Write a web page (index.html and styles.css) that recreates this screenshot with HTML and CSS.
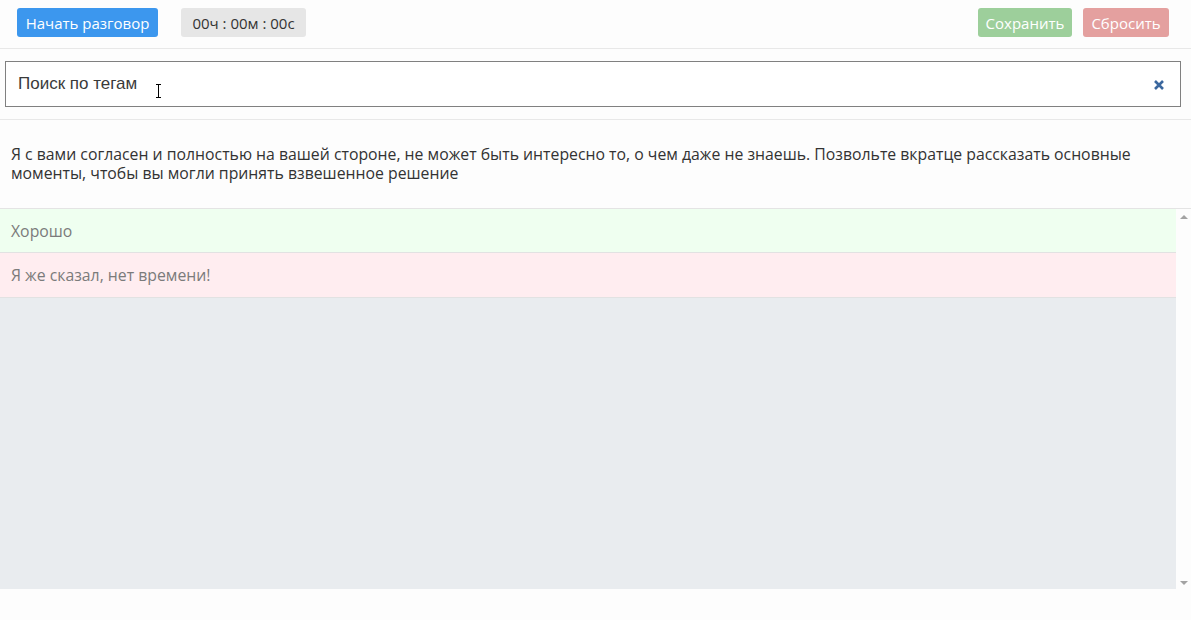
FILE: index.html
```html
<!DOCTYPE html>
<html lang="ru">
<head>
<meta charset="utf-8">
<link rel="stylesheet" href="styles.css">
</head>
<body>
<div class="page">
  <header class="topbar">
    <div class="left">
      <button class="btn btn-blue">Начать разговор</button>
      <span class="timer">00ч : 00м : 00с</span>
    </div>
    <div class="right">
      <button class="btn btn-green">Сохранить</button>
      <button class="btn btn-red">Сбросить</button>
    </div>
  </header>
  <section class="search-wrap">
    <div class="search">
      <span class="search-text">Поиск по тегам</span>
      <span class="ibeam"></span>
      <svg class="clear" width="12" height="12" viewBox="0 0 12 12"><path d="M2 2 L10 10 M10 2 L2 10" stroke="#3a679e" stroke-width="2.6" stroke-linecap="butt"/></svg>
    </div>
  </section>
  <section class="phrase">
    <p>Я с вами согласен и полностью на вашей стороне, не может быть интересно то, о чем даже не знаешь. Позвольте вкратце рассказать основные моменты, чтобы вы могли принять взвешенное решение</p>
  </section>
  <section class="answers">
    <div class="list">
      <div class="row row-good">Хорошо</div>
      <div class="row row-bad">Я же сказал, нет времени!</div>
      <div class="fill"></div>
    </div>
    <div class="scrollbar">
      <span class="arrow up"></span>
      <span class="arrow down"></span>
    </div>
  </section>
</div>
</body>
</html>
```
FILE: styles.css
```css
* { box-sizing: border-box; }
html, body { margin: 0; padding: 0; }
body {
  background: #fdfdfd;
  font-family: "Open Sans", "Noto Sans", sans-serif;
  color: #333;
  width: 1191px;
  height: 620px;
  overflow: hidden;
}
.topbar {
  height: 49px;
  display: flex;
  justify-content: space-between;
  align-items: flex-start;
  padding: 8px 22px 0 17px;
  border-bottom: 1px solid #e8e8e8;
}
.left, .right { display: flex; align-items: center; }
.left { gap: 23px; }
.right { gap: 11px; }
.btn {
  border: none;
  border-radius: 3px;
  height: 29px;
  font-family: "Open Sans", sans-serif;
  font-size: 15px;
  font-weight: 400;
  color: #fff;
  padding: 0;
  cursor: pointer;
}
.btn-blue { background: #3c97ee; width: 141px; }
.btn-green { background: #9dcf9b; width: 94px; }
.btn-red { background: #e4a09f; width: 86px; }
.timer {
  background: #e6e6e6;
  border-radius: 3px;
  height: 29px;
  width: 125px;
  display: flex;
  align-items: center;
  justify-content: center;
  font-size: 15px;
  color: #333;
}
.search-wrap {
  padding: 12px 10px 12px 5px;
  border-bottom: 1px solid #e8e8e8;
}
.search {
  position: relative;
  height: 46px;
  border: 1px solid #808080;
  display: flex;
  align-items: center;
  padding: 0 15px 0 12px;
  background: #fff;
}
.search-text {
  font-family: "Liberation Sans", Arial, sans-serif;
  font-size: 17px;
  color: #3a3a3a;
  flex: 1;
}
.ibeam {
  position: absolute;
  left: 150px;
  top: 22px;
  width: 5px;
  height: 14px;
  border-top: 1px solid #000;
  border-bottom: 1px solid #000;
}
.ibeam::after {
  content: "";
  position: absolute;
  left: 2px;
  top: 0;
  width: 1px;
  height: 12px;
  background: #000;
}
.clear { margin-top: 1px; }
.phrase {
  padding: 25px 11px 25px 11px;
  border-bottom: 1px solid #e4e4e4;
}
.phrase p {
  margin: 0;
  font-size: 15.8px;
  line-height: 19px;
  color: #333;
}
.answers {
  display: flex;
  height: 380px;
}
.list {
  flex: 1;
  display: flex;
  flex-direction: column;
}
.row {
  height: 44px;
  padding: 0 11px;
  display: flex;
  align-items: center;
  font-size: 15.8px;
  color: #7b7b7b;
  border-bottom: 1px solid #e2e2e2;
}
.row-good { background: #effff0; }
.row-bad { background: #ffedf0; height: 45px; }
.fill { flex: 1; background: #e9ecef; }
.scrollbar {
  width: 15px;
  position: relative;
  background: #fdfdfd;
}
.arrow {
  position: absolute;
  left: 4px;
  width: 0; height: 0;
  border-left: 4px solid transparent;
  border-right: 4px solid transparent;
}
.arrow.up { top: 6px; border-bottom: 4px solid #a3a3a3; }
.arrow.down { bottom: 4px; border-top: 4px solid #a3a3a3; }
```
